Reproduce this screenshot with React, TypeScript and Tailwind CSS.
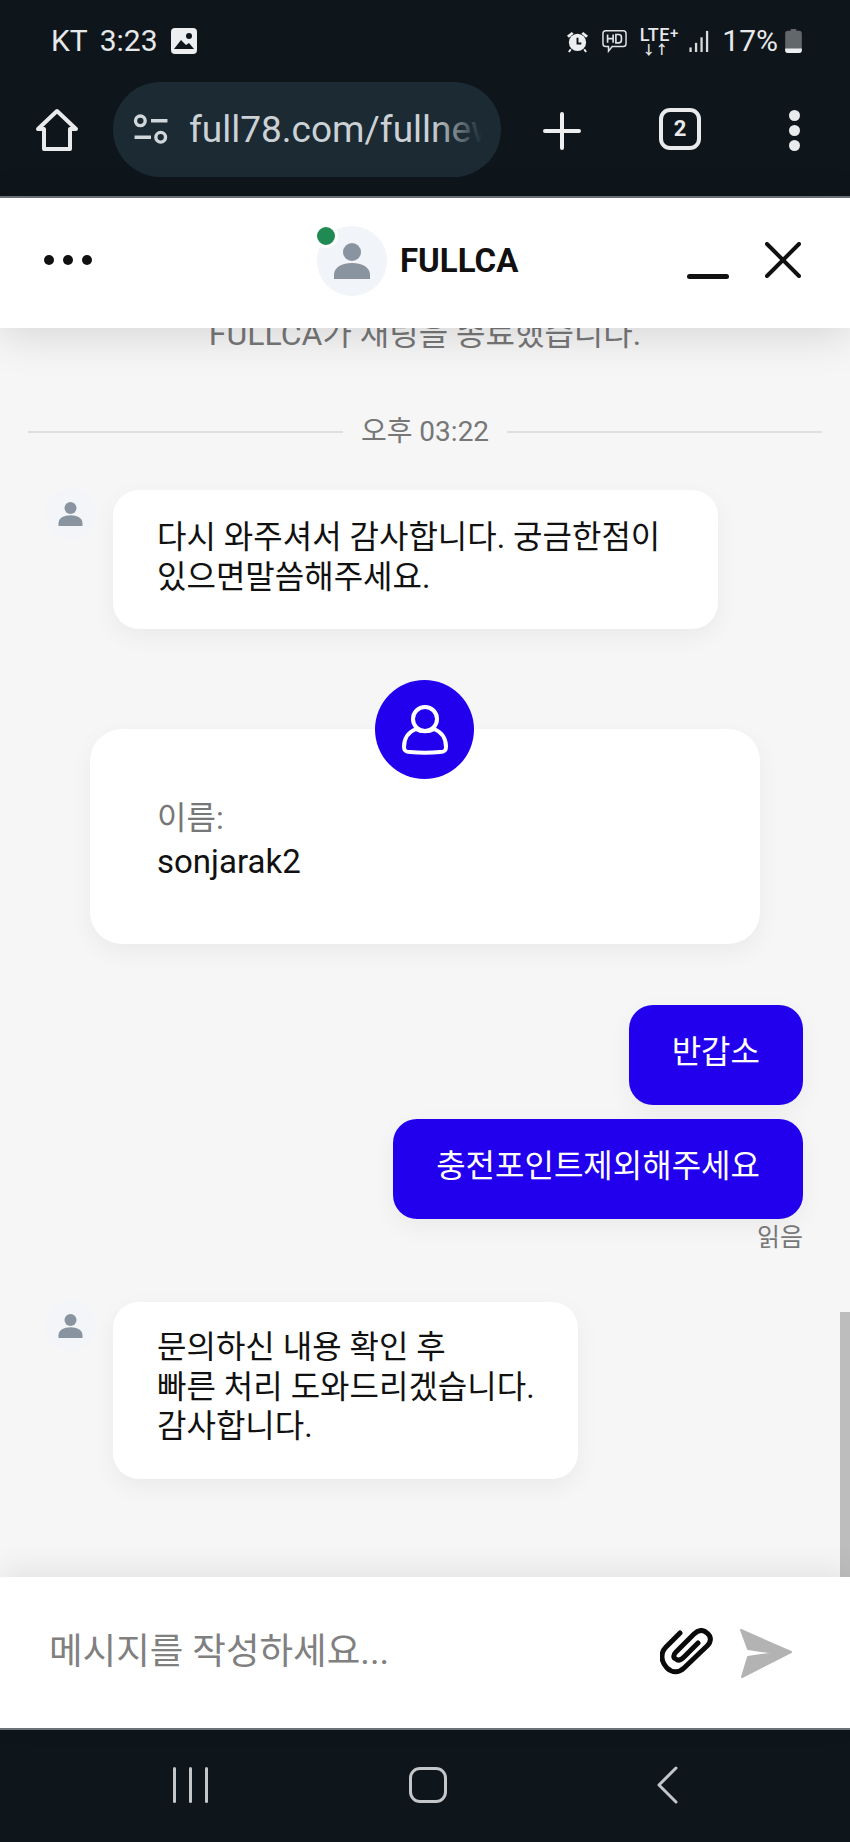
import React from 'react';

const font = "font-['Roboto','Noto_Sans_CJK_KR',sans-serif]";

function PersonIcon({ className }: { className: string }) {
  return (
    <svg className={className} viewBox="0 0 36 36" fill="#8a94a0">
      <ellipse cx="18" cy="9" rx="9" ry="9" />
      <path d="M0 36v-4c0-8 8-12 18-12s18 4 18 12v4z" />
    </svg>
  );
}

function BotAvatar() {
  return (
    <div className="w-[51px] h-[51px] -mt-[2px] rounded-full bg-[#f3f5f8] flex items-center justify-center shrink-0">
      <PersonIcon className="w-[25px] h-[24px]" />
    </div>
  );
}

function StatusBar() {
  return (
    <div className="h-[82px] flex items-center justify-between pl-[51px] pr-[48px] text-[#e6e8ea]">
      <div className="flex items-center text-[30px] leading-none">
        <span>KT</span>
        <span className="ml-[12px]">3:23</span>
        <svg className="w-[26px] h-[26px] ml-[13px]" viewBox="0 0 26 26">
          <rect x="0" y="0" width="26" height="26" rx="4" fill="#eceeef" />
          <circle cx="18" cy="8" r="3" fill="#0e151b" />
          <path d="M3 21l7-9 5 5 3-2 5 6z" fill="#0e151b" />
        </svg>
      </div>
      <div className="flex items-center">
        <svg className="w-[23px] h-[23px]" viewBox="0 0 24 24">
          <path d="M1 6l5-4 2 2-5 4zM23 6l-5-4-2 2 5 4z" fill="#eceeef" />
          <circle cx="12" cy="13" r="9" fill="#eceeef" />
          <path d="M12 8v6h4" stroke="#0e151b" strokeWidth="2" fill="none" />
          <path d="M5 20l-2 3M19 20l2 3" stroke="#eceeef" strokeWidth="2" />
        </svg>
        <svg className="w-[27px] h-[24px] ml-[12px]" viewBox="0 0 27 26" fill="none">
          <path d="M4 2h19a3 3 0 0 1 3 3v11a3 3 0 0 1-3 3H11l-4 5v-5H4a3 3 0 0 1-3-3V5a3 3 0 0 1 3-3z" stroke="#dfe2e4" strokeWidth="1.6" />
          <path d="M6 6v9M12 6v9M6 10.500h6M15 6v9h3a3 3 0 0 0 3-3V9a3 3 0 0 0-3-3z" stroke="#dfe2e4" strokeWidth="1.800" />
        </svg>
        <div className="flex flex-col items-center ml-[10px] -mt-[2px] w-[42px]">
          <span className="text-[18px] leading-[17px] font-medium tracking-[0.5px] whitespace-nowrap">LTE<span className="relative -top-[3px] text-[15px]">+</span></span>
          <span className="text-[13px] leading-[10px] font-bold -ml-[8px]">↓↑</span>
        </div>
        <svg className="w-[23px] h-[22px] ml-[8px]" viewBox="0 0 22 24" fill="#d8dbde">
          <rect x="0" y="19" width="2.500" height="5" />
          <rect x="6" y="14" width="2.500" height="10" />
          <rect x="12" y="8" width="2.500" height="16" />
          <rect x="18" y="1" width="2.500" height="23" />
        </svg>
        <span className="text-[30px] leading-none ml-[11px]">17%</span>
        <svg className="w-[17px] h-[24px] ml-[7px]" viewBox="0 0 18 26">
          <path d="M6 0h6v2h3a3 3 0 0 1 3 3v18a3 3 0 0 1-3 3H3a3 3 0 0 1-3-3V5a3 3 0 0 1 3-3h3z" fill="#63676b" />
          <path d="M0 21h18v2a3 3 0 0 1-3 3H3a3 3 0 0 1-3-3z" fill="#eceeef" />
        </svg>
      </div>
    </div>
  );
}

function BrowserBar() {
  return (
    <div className="h-[114px] flex items-start pl-[35px] text-[#e8eaec]">
      <svg className="w-[44px] h-[44px] mt-[26px] shrink-0" viewBox="0 0 44 44" fill="none" stroke="#e8eaec" strokeWidth="4" strokeLinejoin="round">
        <path d="M22 3L3 21h6v20h26V21h6z" />
      </svg>
      <div className="w-[388px] h-[95px] ml-[34px] rounded-full bg-[#1b2a33] flex items-center pl-[20px] shrink-0 overflow-hidden">
        <svg className="w-[36px] h-[31px] shrink-0" viewBox="0 0 36 32" fill="none" stroke="#d2d7db" strokeWidth="3.500">
          <circle cx="7" cy="7" r="5" />
          <path d="M18 7h17M1 24h17" />
          <circle cx="28" cy="24" r="5" />
        </svg>
        <div className="relative w-[293px] ml-[20px] overflow-hidden whitespace-nowrap text-[37px] leading-[44px] text-[#ccd1d5]">
          full78.com/fullnew
          <div className="absolute right-0 top-0 bottom-0 w-[50px] bg-gradient-to-r from-transparent to-[#1b2a33]" />
        </div>
      </div>
      <svg className="w-[38px] h-[38px] ml-[42px] mt-[30px] shrink-0" viewBox="0 0 38 38" stroke="#eceeef" strokeWidth="4" strokeLinecap="round">
        <path d="M19 2v34M2 19h34" />
      </svg>
      <div className="w-[42px] h-[42px] ml-[78px] mt-[26px] rounded-[11px] border-[4px] border-[#e8eaec] flex items-center justify-center text-[22px] font-bold leading-none shrink-0">
        2
      </div>
      <div className="flex flex-col gap-[4px] ml-[88px] mt-[28px] shrink-0">
        <span className="w-[11px] h-[11px] rounded-full bg-[#e8eaec]" />
        <span className="w-[11px] h-[11px] rounded-full bg-[#e8eaec]" />
        <span className="w-[11px] h-[11px] rounded-full bg-[#e8eaec]" />
      </div>
    </div>
  );
}

function ChatHeader() {
  return (
    <div className="relative z-10 h-[130px] bg-white flex items-center pl-[44px] pr-[49px] shadow-[0_8px_40px_rgba(0,0,0,0.13)]">
      <div className="flex gap-[9px] -mt-[6px] w-[273px] shrink-0">
        <span className="w-[10px] h-[10px] rounded-full bg-[#111]" />
        <span className="w-[10px] h-[10px] rounded-full bg-[#111]" />
        <span className="w-[10px] h-[10px] rounded-full bg-[#111]" />
      </div>
      <div className="flex flex-1 items-center -mt-[5px]">
        <div className="relative w-[70px] h-[70px] rounded-full bg-[#f1f5f9] flex items-center justify-center">
          <PersonIcon className="w-[36px] h-[36px]" />
          <span className="absolute -left-[3px] -top-[2px] w-[24px] h-[24px] rounded-full bg-[#1f8a52] border-[3px] border-white" />
        </div>
        <span className="ml-[13px] text-[33px] leading-none font-bold text-[#111]">FULLCA</span>
      </div>
      <div className="flex items-center">
        <span className="w-[42px] h-[5px] rounded-sm bg-[#111] mt-[26px]" />
        <svg className="w-[36px] h-[36px] ml-[36px] -mt-[6px]" viewBox="0 0 36 36" stroke="#111" strokeWidth="4" strokeLinecap="round">
          <path d="M2 2l32 32M34 2L2 34" />
        </svg>
      </div>
    </div>
  );
}

function ChatBody() {
  return (
    <div className="relative flex-1 overflow-hidden bg-[#f6f6f7]">
      <div className="text-center text-[32px] leading-[40px] text-[#777] -mt-[14px]">FULLCA가 채팅을 종료했습니다.</div>

      <div className="flex items-center mt-[62px] px-[28px]">
        <div className="flex-1 h-[2px] bg-[#dfdfdf]" />
        <span className="px-[18px] text-[28px] leading-[32px] text-[#777]">오후 03:22</span>
        <div className="flex-1 h-[2px] bg-[#dfdfdf]" />
      </div>

      <div className="flex items-start mt-[42px] pl-[45px]">
        <BotAvatar />
        <div className="w-[605px] ml-[17px] pl-[44px] pr-[40px] pt-[27px] pb-[32px] bg-white rounded-[26px] text-[32px] leading-[40px] text-[#111] break-keep shadow-[0_8px_24px_rgba(0,0,0,0.05)]">
          다시 와주셔서 감사합니다. 궁금한점이 있으면말씀해주세요.
        </div>
      </div>

      <div className="relative ml-[90px] mt-[100px] w-[670px] bg-white rounded-[32px] pl-[67px] pt-[67px] pb-[60px] shadow-[0_8px_24px_rgba(0,0,0,0.05)]">
        <div className="absolute left-[285px] -top-[49px] w-[99px] h-[99px] rounded-full bg-[#2200ee] flex items-center justify-center">
          <svg className="w-[48px] h-[50px]" viewBox="0 0 48 50" fill="none" stroke="#fff" strokeWidth="4" strokeLinejoin="round">
            <ellipse cx="24" cy="14" rx="12" ry="12" />
            <path d="M15 24C7 27 3 34 3 42c0 4 2 5 6 5 10 1 20 1 30 0 4 0 6-1 6-5 0-8-4-15-12-18-5 3-13 3-18 0z" />
          </svg>
        </div>
        <div className="text-[32px] leading-[44px] text-[#777]">이름:</div>
        <div className="text-[33px] leading-[44px] text-[#111]">sonjarak2</div>
      </div>

      <div className="flex flex-col items-end gap-[14px] mt-[61px] pr-[47px]">
        <div className="h-[100px] px-[43px] pb-[6px] flex items-center bg-[#2200ee] text-white text-[32px] rounded-[24px] shadow-[0_8px_24px_rgba(0,0,0,0.05)]">반갑소</div>
        <div className="h-[100px] px-[43px] pb-[6px] flex items-center bg-[#2200ee] text-white text-[32px] rounded-[24px] shadow-[0_8px_24px_rgba(0,0,0,0.05)]">충전포인트제외해주세요</div>
      </div>
      <div className="mt-[3px] pr-[47px] text-right text-[25px] leading-[32px] text-[#777]">읽음</div>

      <div className="flex items-start mt-[48px] pl-[45px]">
        <BotAvatar />
        <div className="w-fit ml-[17px] pl-[44px] pr-[43px] pt-[26px] pb-[32px] bg-white rounded-[26px] text-[32px] leading-[39.500px] text-[#111] shadow-[0_8px_24px_rgba(0,0,0,0.05)]">
          문의하신 내용 확인 후<br />
          빠른 처리 도와드리겠습니다.<br />
          감사합니다.
        </div>
      </div>

      <div className="absolute right-0 bottom-0 w-[10px] h-[265px] bg-[#bdbdbd]" />
    </div>
  );
}

function InputBar() {
  return (
    <div className="relative z-10 h-[151px] bg-white flex items-center pl-[49px] pr-[57px] shadow-[0_-8px_30px_rgba(0,0,0,0.08)]">
      <span className="flex-1 text-[36.500px] leading-none text-[#808080]">메시지를 작성하세요...</span>
      <svg className="w-[54px] h-[50px]" viewBox="0 0 54 50" fill="none" stroke="#0a0a0a" strokeWidth="5" strokeLinecap="round" strokeLinejoin="round">
        <path d="M20 5L6 19C0 25 1 34 7 40c5 5 12 5 17 0L47 18c5-5 4-10 0-13-4-4-9-3-13 1L16 24c-3 3-3 6 0 7 2 2 5 1 8-2L38 15" />
      </svg>
      <svg className="w-[54px] h-[52px] ml-[25px]" viewBox="0 0 54 52" fill="#b3b3b3" stroke="#b3b3b3" strokeWidth="2" strokeLinejoin="round">
        <path d="M2 3l50 22L3 50l6-20 27-4-27-4z" />
      </svg>
    </div>
  );
}

function NavBar() {
  return (
    <div className="h-[114px] bg-[#0e151b] border-t-2 border-[#6e757a] flex items-center pl-[173px] pb-[2px]">
      <div className="flex gap-[13px]">
        <span className="w-[3px] h-[36px] rounded-full bg-[#c4c7c9]" />
        <span className="w-[3px] h-[36px] rounded-full bg-[#c4c7c9]" />
        <span className="w-[3px] h-[36px] rounded-full bg-[#c4c7c9]" />
      </div>
      <div className="w-[38px] h-[36px] ml-[201px] rounded-[11px] border-[3px] border-[#c4c7c9]" />
      <svg className="w-[22px] h-[38px] ml-[209px]" viewBox="0 0 22 38" fill="none" stroke="#c4c7c9" strokeWidth="3" strokeLinecap="round" strokeLinejoin="round">
        <path d="M20 2L3 19l17 17" />
      </svg>
    </div>
  );
}

export default function App() {
  return (
    <div className={`w-[850px] h-[1842px] flex flex-col overflow-hidden ${font}`}>
      <div className="h-[198px] bg-[#0e151b] border-b-2 border-[#6e757a]">
        <StatusBar />
        <BrowserBar />
      </div>
      <ChatHeader />
      <ChatBody />
      <InputBar />
      <NavBar />
    </div>
  );
}
